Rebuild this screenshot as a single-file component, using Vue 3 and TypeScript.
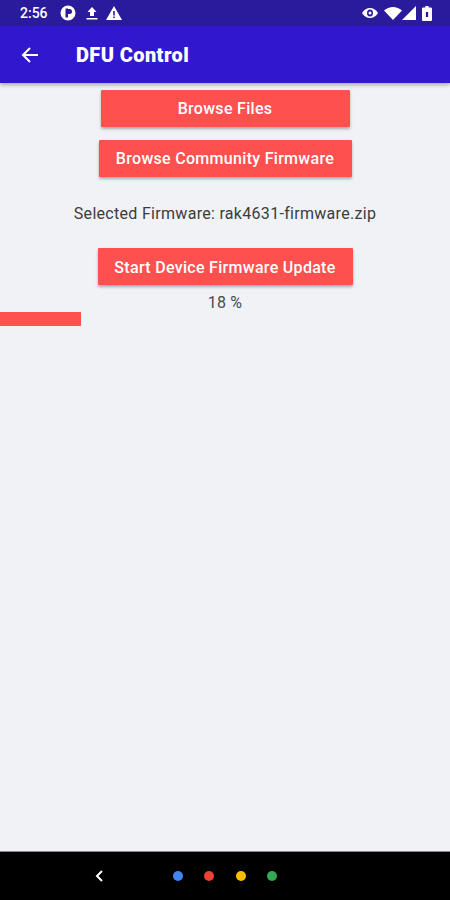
<script setup lang="ts">
const progress = 18
const dots = ["#4285f4", "#ea4335", "#fbbc05", "#34a853"]
</script>

<template>
  <div class="screen">
    <div class="status-bar">
      <span class="time">2:56</span>
      <svg class="ic" width="16" height="16" viewBox="0 0 16 16">
        <circle cx="8" cy="8" r="7.5" fill="#fff" />
        <path d="M5.5 3.5h2.5v9H5.5z M8 4h1.5a2.5 2.5 0 0 1 0 5H8z" fill="#2a1a9c" />
      </svg>
      <svg class="ic up" width="14" height="16" viewBox="0 0 14 16">
        <path d="M7 2 11.5 7H9v4H5V7H2.500z M1.500 13h11v1.600h-11z" fill="#fff" />
      </svg>
      <svg class="ic warn" width="16" height="14" viewBox="0 0 16 14">
        <path d="M8 0 16 14H0z" fill="#fff" />
        <path d="M7.200 5h1.600v4.500H7.200z M7.200 10.500h1.600v1.500H7.200z" fill="#2a1a9c" />
      </svg>
      <span class="spacer"></span>
      <svg width="16" height="12" viewBox="0 0 16 12">
        <path d="M0 6C2 2.500 5 1 8 1s6 1.500 8 5c-2 3.500-5 5-8 5S2 9.500 0 6z" fill="#fff" />
        <ellipse cx="8" cy="6" rx="3" ry="3.500" fill="#2a1a9c" />
        <circle cx="8" cy="6" r="1.500" fill="#fff" />
      </svg>
      <svg class="wifi" width="18" height="13" viewBox="0 0 17 13" preserveAspectRatio="none">
        <path d="M0 3.500C2.500 1.200 5.500 0 8.500 0s6 1.200 8.500 3.500L8.500 13z" fill="#fff" />
      </svg>
      <svg class="signal" width="14" height="14" viewBox="0 0 13 13">
        <path d="M13 0v13H0z" fill="#fff" />
      </svg>
      <svg class="battery" width="10" height="15" viewBox="0 0 9 15" preserveAspectRatio="none">
        <path d="M3 0h3v1.500h2a1 1 0 0 1 1 1V14a1 1 0 0 1-1 1H1a1 1 0 0 1-1-1V2.500a1 1 0 0 1 1-1h2z" fill="#fff" />
        <path d="M3.500 6h2v5h-2z" fill="#2a1a9c" />
      </svg>
    </div>

    <header class="toolbar">
      <svg class="back" width="18" height="18" viewBox="0 0 18 18">
        <path d="M17 9H2.500M9 2 2 9l7 7" fill="none" stroke="#fff" stroke-width="2" />
      </svg>
      <h1>DFU Control</h1>
    </header>

    <main class="content">
      <button class="btn files">Browse Files</button>
      <button class="btn community">Browse Community Firmware</button>
      <p class="selected">Selected Firmware: rak4631-firmware.zip</p>
      <button class="btn start">Start Device Firmware Update</button>
      <p class="percent">{{ progress }} %</p>
      <div class="track">
        <div class="bar" :style="{ width: progress + '%' }"></div>
      </div>
    </main>

    <footer class="nav-bar">
      <svg class="nav-back" width="9" height="12" viewBox="0 0 9 12">
        <path d="M7 1 2 6l5 5" fill="none" stroke="#fff" stroke-width="2" />
      </svg>
      <div class="dots">
        <span v-for="color in dots" :key="color" class="dot" :style="{ background: color }"></span>
      </div>
    </footer>
  </div>
</template>

<style scoped>
.screen {
  width: 450px;
  height: 900px;
  display: flex;
  flex-direction: column;
  background: #f0f2f6;
  font-family: Roboto, "Liberation Sans", sans-serif;
  overflow: hidden;
}

.status-bar {
  height: 26px;
  flex: none;
  display: flex;
  align-items: center;
  padding: 0 18px 0 20px;
  box-sizing: border-box;
  background: #2a1a9c;
  color: #fff;
}

.time {
  font-size: 14px;
  font-weight: 500;
  margin-right: 12px;
}

.ic {
  margin-right: 9px;
}

.up {
  margin-right: 7px;
}

.spacer {
  flex: 1;
}

.wifi {
  margin-left: 6px;
}

.battery {
  margin-left: 6px;
}

.toolbar {
  height: 57px;
  flex: none;
  display: flex;
  align-items: center;
  padding-left: 21px;
  box-sizing: border-box;
  background: #3118cf;
  box-shadow: 0 2px 4px rgba(0, 0, 0, 0.3);
  z-index: 1;
}

.toolbar h1 {
  margin: 0 0 0 37px;
  color: #fff;
  font-size: 20px;
  font-weight: 900;
  letter-spacing: 0.4px;
}

.content {
  flex: 1;
  display: flex;
  flex-direction: column;
  align-items: center;
  padding-top: 7px;
}

.btn {
  height: 37px;
  padding: 0;
  border: none;
  border-radius: 1px;
  background: #ff5050;
  color: #fff;
  font-family: inherit;
  font-size: 16px;
  font-weight: 500;
  letter-spacing: 0.3px;
  box-shadow: 0 2px 3px rgba(0, 0, 0, 0.3);
}

.files {
  width: 249px;
}

.community {
  width: 253px;
  margin-top: 13px;
}

.start {
  width: 255px;
  padding-top: 1px;
}

.selected {
  margin: 28px 0 25px;
  height: 18px;
  line-height: 18px;
  font-size: 16px;
  letter-spacing: 0.3px;
  color: #3c3c3c;
}

.percent {
  margin: 8px 0 0;
  height: 19px;
  line-height: 19px;
  font-size: 16px;
  letter-spacing: 0.2px;
  color: #4a4a4a;
}

.track {
  align-self: stretch;
  height: 14px;
}

.bar {
  height: 100%;
  background: #ff5050;
}

.nav-bar {
  height: 48px;
  flex: none;
  position: relative;
  display: flex;
  align-items: center;
  background: #000;
  border-top: 1px solid #888;
  box-sizing: content-box;
}

.nav-back {
  margin-left: 95px;
}

.dots {
  margin-left: 69px;
  display: flex;
  gap: 21.3px;
}

.dot {
  width: 10px;
  height: 10px;
  border-radius: 50%;
}
</style>
